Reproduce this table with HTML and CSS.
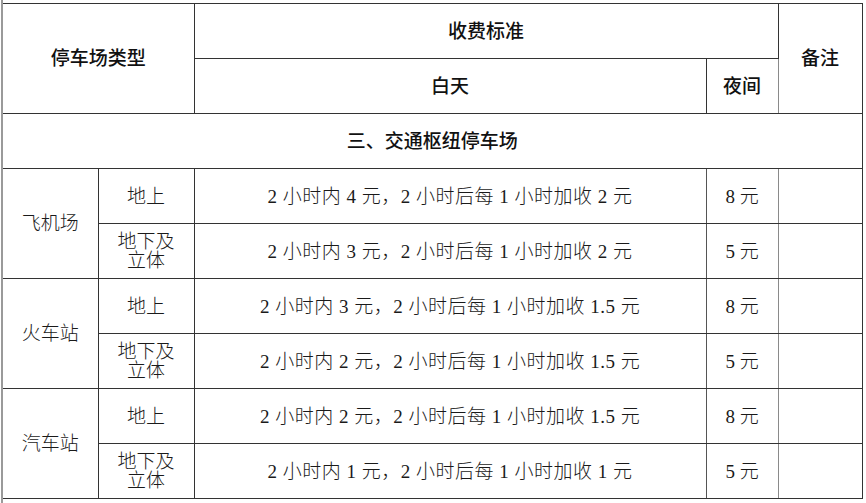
FILE: index.html
```html
<!DOCTYPE html>
<html lang="zh">
<head>
<meta charset="utf-8">
<link rel="stylesheet" href="styles.css">
</head>
<body>
<div class="sheet">
<table class="fee">
  <colgroup>
    <col class="c-type">
    <col class="c-sub">
    <col class="c-day">
    <col class="c-night">
    <col class="c-note">
  </colgroup>
  <tr class="r">
    <th class="head first" colspan="2" rowspan="2">停车场类型</th>
    <th class="head" colspan="2">收费标准</th>
    <th class="head note-h" rowspan="2">备注</th>
  </tr>
  <tr class="r">
    <th class="head">白天</th>
    <th class="head night-h">夜间</th>
  </tr>
  <tr class="r">
    <th class="head section first" colspan="5">三、交通枢纽停车场</th>
  </tr>
  <tr class="r">
    <td class="place first" rowspan="2">飞机场</td>
    <td class="sub">地上</td>
    <td class="day">2 小时内 4 元，2 小时后每 1 小时加收 2 元</td>
    <td class="night">8 元</td>
    <td class="note"></td>
  </tr>
  <tr class="r">
    <td class="sub two">地下及<br>立体</td>
    <td class="day">2 小时内 3 元，2 小时后每 1 小时加收 2 元</td>
    <td class="night">5 元</td>
    <td class="note"></td>
  </tr>
  <tr class="r">
    <td class="place first" rowspan="2">火车站</td>
    <td class="sub">地上</td>
    <td class="day">2 小时内 3 元，2 小时后每 1 小时加收 1.5 元</td>
    <td class="night">8 元</td>
    <td class="note"></td>
  </tr>
  <tr class="r">
    <td class="sub two">地下及<br>立体</td>
    <td class="day">2 小时内 2 元，2 小时后每 1 小时加收 1.5 元</td>
    <td class="night">5 元</td>
    <td class="note"></td>
  </tr>
  <tr class="r">
    <td class="place first" rowspan="2">汽车站</td>
    <td class="sub">地上</td>
    <td class="day">2 小时内 2 元，2 小时后每 1 小时加收 1.5 元</td>
    <td class="night">8 元</td>
    <td class="note"></td>
  </tr>
  <tr class="r">
    <td class="sub two">地下及<br>立体</td>
    <td class="day">2 小时内 1 元，2 小时后每 1 小时加收 1 元</td>
    <td class="night">5 元</td>
    <td class="note"></td>
  </tr>
</table>
</div>
</body>
</html>
```

FILE: styles.css
```css
html, body {
  margin: 0;
  padding: 0;
  background: #ffffff;
}

body {
  padding: 0 0 0 1px;
}

.sheet {
  border-left: 2px solid #9a9a9a;
  height: 503px;
  box-sizing: border-box;
  padding-top: 3px;
}

.fee {
  border-collapse: collapse;
  table-layout: fixed;
  width: 859px;
  color: #111;
  border-right: 1px solid #333;
  border-top: 1px solid #777;
}

.c-type { width: 95px; }
.c-sub { width: 96px; }
.c-day { width: 512px; }
.c-night { width: 72px; }
.c-note { width: 84px; }

.r { height: 55px; }

th, td {
  border: 1px solid #333;
  padding: 0 0 4px 0;
  text-align: center;
  vertical-align: middle;
}

.first { border-left: none; }

.head {
  font-family: "Noto Sans CJK SC", "Liberation Sans", sans-serif;
  font-size: 19px;
  font-weight: 500;
  color: #111;
}

.note-h { border-left-color: #8a8a8a; }

td {
  font-family: "Liberation Serif", "Noto Sans CJK SC", serif;
  font-size: 19px;
  font-weight: 300;
  color: #1a1a1a;
}

.day { letter-spacing: 0.5px; border-right-color: #555; }

.sub.two {
  line-height: 19px;
  padding-top: 2px;
  padding-bottom: 2px;
}

.night { border-right-color: #8a8a8a; }
```
